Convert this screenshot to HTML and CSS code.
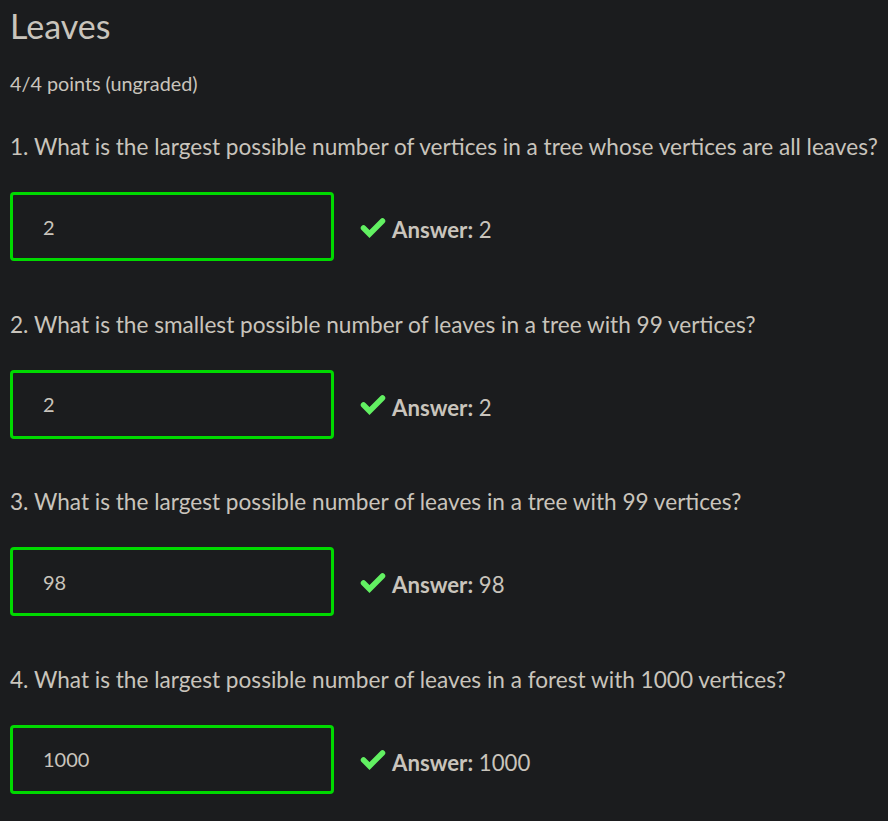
FILE: index.html
```html
<!DOCTYPE html>
<html>
<head>
<meta charset="utf-8">
<link rel="stylesheet" href="styles.css">
</head>
<body>
<main class="problem">
  <h2 class="title">Leaves</h2>
  <div class="points">4/4 points (ungraded)</div>

  <section class="question">
    <p class="prompt">1. What is the largest possible number of vertices in a tree whose vertices are all leaves?</p>
    <div class="row">
      <div class="input">2</div>
      <div class="answer"><svg class="check" viewBox="0 0 26 20"><path d="M3.5 10 L9.5 16 L22.5 3" /></svg><b>Answer:</b>&nbsp;2</div>
    </div>
  </section>

  <section class="question">
    <p class="prompt">2. What is the smallest possible number of leaves in a tree with 99 vertices?</p>
    <div class="row">
      <div class="input">2</div>
      <div class="answer"><svg class="check" viewBox="0 0 26 20"><path d="M3.5 10 L9.5 16 L22.5 3" /></svg><b>Answer:</b>&nbsp;2</div>
    </div>
  </section>

  <section class="question">
    <p class="prompt">3. What is the largest possible number of leaves in a tree with 99 vertices?</p>
    <div class="row">
      <div class="input">98</div>
      <div class="answer"><svg class="check" viewBox="0 0 26 20"><path d="M3.5 10 L9.5 16 L22.5 3" /></svg><b>Answer:</b>&nbsp;98</div>
    </div>
  </section>

  <section class="question">
    <p class="prompt">4. What is the largest possible number of leaves in a forest with 1000 vertices?</p>
    <div class="row">
      <div class="input">1000</div>
      <div class="answer"><svg class="check" viewBox="0 0 26 20"><path d="M3.5 10 L9.5 16 L22.5 3" /></svg><b>Answer:</b>&nbsp;1000</div>
    </div>
  </section>
</main>
</body>
</html>
```
FILE: styles.css
```css
html, body {
  margin: 0;
  padding: 0;
  background: #1b1c1e;
}
body {
  font-family: Lato, "Open Sans", sans-serif;
  color: #c9c4bc;
}
.problem {
  padding: 0 10px;
}
.title {
  margin: 0;
  padding-top: 5px;
  font-size: 34px;
  font-weight: 400;
  line-height: 42px;
}
.points {
  margin-top: 24px;
  font-size: 19.8px;
  line-height: 24px;
}
.question {
  margin-top: 39px;
}
.question + .question {
  margin-top: 50.5px;
}
.prompt {
  margin: 0;
  font-size: 22.6px;
  line-height: 26px;
  white-space: nowrap;
}
.row {
  display: flex;
  align-items: center;
  margin-top: 32px;
}
.input {
  box-sizing: border-box;
  width: 324px;
  height: 69px;
  border: 3px solid #00d900;
  border-radius: 4px;
  padding-left: 30px;
  display: flex;
  align-items: center;
  font-size: 20px;
}
.answer {
  display: flex;
  align-items: center;
  margin-left: 26px;
  font-size: 22.2px;
  padding-top: 6px;
}
.answer b {
  font-weight: 700;
}
.check {
  width: 26px;
  height: 20px;
  margin-right: 6px;
  margin-top: -4px;
}
.check path {
  fill: none;
  stroke: #62f062;
  stroke-width: 5.5;
  stroke-linecap: round;
  stroke-linejoin: miter;
}
```
